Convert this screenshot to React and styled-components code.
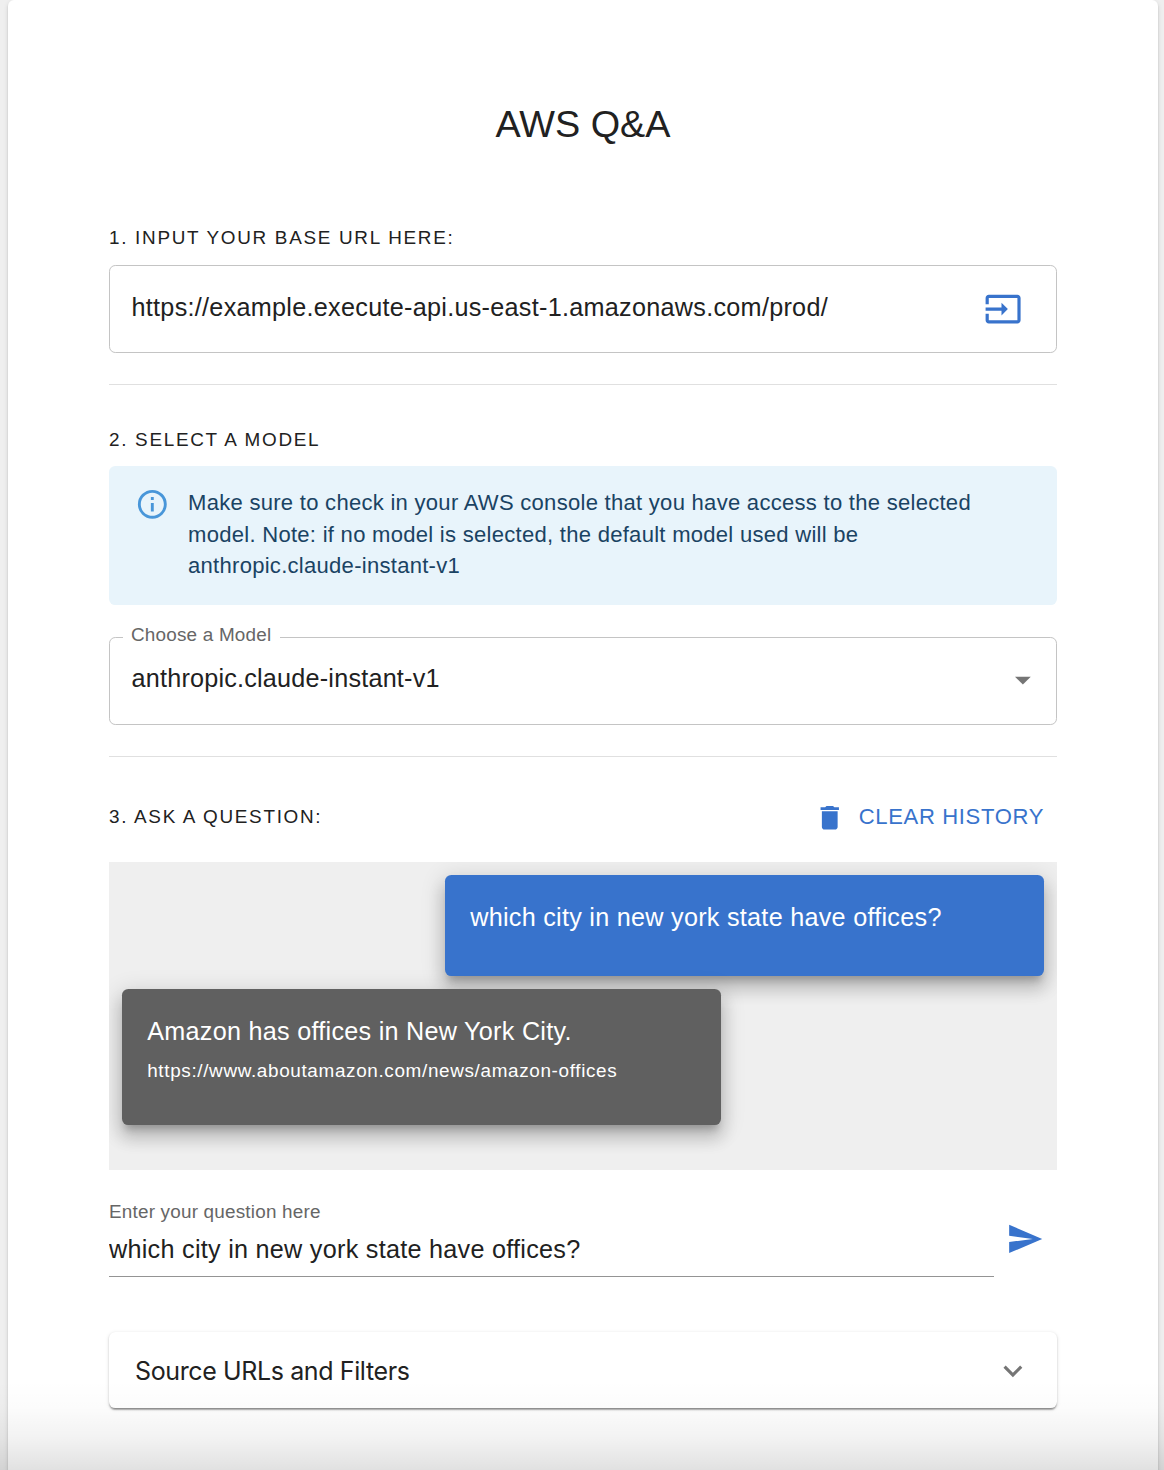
import React, { useState } from "react";
import styled, { createGlobalStyle } from "styled-components";

const GlobalStyle = createGlobalStyle`
  *, *::before, *::after { box-sizing: border-box; }
  html, body { margin: 0; padding: 0; }
  body {
    height: 1470px;
    overflow: hidden;
    background: #efefef;
    color: #212121;
    font-family: "Liberation Sans", Helvetica, Arial, sans-serif;
    font-size: 25.2px;
    letter-spacing: 0.01em;
  }
`;

const Page = styled.div`
  position: relative;
  height: 1470px;
  padding: 0 6px 0 8px;
  overflow: hidden;
`;

const Paper = styled.main`
  display: flex;
  flex-direction: column;
  height: 1500px;
  padding: 96px 101px 0;
  background: #fff;
  border-radius: 6px;
  box-shadow: 0 3px 2px -2px rgba(0, 0, 0, 0.2), 0 2px 2px rgba(0, 0, 0, 0.14),
    0 2px 5px rgba(0, 0, 0, 0.12);
`;

const BottomShade = styled.div`
  position: absolute;
  left: 0;
  right: 0;
  bottom: 0;
  height: 90px;
  pointer-events: none;
  background: linear-gradient(
    rgba(0, 0, 0, 0),
    rgba(0, 0, 0, 0.01) 30%,
    rgba(0, 0, 0, 0.05) 65%,
    rgba(0, 0, 0, 0.118)
  );
`;

const Title = styled.h1`
  margin: 0 0 61px;
  font-size: 37.8px;
  font-weight: 400;
  line-height: 56px;
  letter-spacing: 0;
  text-align: center;
`;

const Overline = styled.h2`
  margin: 0;
  font-size: 18.9px;
  font-weight: 400;
  line-height: 50px;
  letter-spacing: 1.7px;
  text-transform: uppercase;
`;

const Divider = styled.hr`
  width: 100%;
  height: 1px;
  margin: 31px 0 ${(p) => p.$after}px;
  border: 0;
  background: #e0e0e0;
`;

const OutlinedField = styled.div`
  display: flex;
  align-items: center;
  justify-content: space-between;
  height: 88px;
  margin-top: ${(p) => p.$gap}px;
  padding: 0 ${(p) => p.$end}px 2px 21.5px;
  border: 1px solid #c4c4c4;
  border-radius: 6.3px;
  position: relative;
`;

const FieldInput = styled.input`
  flex: 1;
  min-width: 0;
  padding: 0 0 2px;
  border: 0;
  outline: 0;
  background: none;
  color: inherit;
  font: inherit;
  letter-spacing: 0.0112em;
`;

const SelectValue = styled.span`
  padding-bottom: 4px;
  letter-spacing: 0.0085em;
`;

const FloatingLabel = styled.label`
  position: absolute;
  top: -16px;
  left: 13px;
  width: 157px;
  padding-left: 8px;
  background: #fff;
  color: #666;
  font-size: 18.9px;
  line-height: 26px;
  letter-spacing: 0.2px;
  white-space: nowrap;
`;

const Alert = styled.div`
  display: flex;
  gap: 18.4px;
  height: 139px;
  margin-top: 1px;
  padding: 21px 25px 0 26px;
  border-radius: 6.3px;
  background: #e8f4fb;
  color: #1a4363;
  font-size: 22.05px;
  line-height: 31.5px;
  letter-spacing: 0.27px;
`;

const AlertText = styled.p`
  width: 800px;
  margin: 0;
`;

const IconButton = styled.button`
  display: flex;
  padding: 0;
  border: 0;
  background: none;
  color: #3873cc;
`;

const Glyph = styled.svg`
  display: block;
  flex: none;
  width: ${(p) => p.$size}px;
  height: ${(p) => p.$size}px;
  margin-top: ${(p) => p.$top || 0}px;
  fill: ${(p) => p.$color || "currentColor"};
`;

const QuestionHeader = styled.div`
  display: flex;
  align-items: center;
  justify-content: space-between;
  height: 60px;
`;

const ClearButton = styled.button`
  display: flex;
  align-items: center;
  gap: 13.2px;
  padding: 0 13px 0 0;
  border: 0;
  background: none;
  color: #3873cc;
  font: inherit;
  font-size: 22.05px;
  letter-spacing: 0.0295em;
  text-transform: uppercase;
`;

const ChatLog = styled.section`
  display: flex;
  flex-direction: column;
  gap: 13px;
  height: 308px;
  margin-top: 15px;
  padding: 13px;
  background: #efefef;
  overflow: hidden;
`;

const Bubble = styled.div`
  flex: none;
  align-self: ${(p) => (p.$mine ? "flex-end" : "flex-start")};
  width: 599px;
  height: ${(p) => (p.$mine ? 101 : 136)}px;
  padding: 24px 25.2px;
  border-radius: 6.3px;
  background: ${(p) => (p.$mine ? "#3873cc" : "#606060")};
  color: #fff;
  line-height: 37.8px;
  letter-spacing: 0.27px;
  box-shadow: 0 7.9px 7.9px -4.7px rgba(0, 0, 0, 0.2),
    0 12.6px 15.75px 1.6px rgba(0, 0, 0, 0.14),
    0 4.7px 22px 3.15px rgba(0, 0, 0, 0.12);
`;

const BubbleLink = styled.div`
  margin-top: 4px;
  font-size: 18.9px;
  line-height: 31px;
  letter-spacing: 0.65px;
`;

const AskRow = styled.form`
  display: flex;
  justify-content: space-between;
  margin-top: 28px;
  padding-right: 13.3px;
`;

const AskField = styled.div`
  display: flex;
  flex-direction: column;
  width: 885px;
  height: 79px;
  border-bottom: 1px solid #949494;
`;

const AskLabel = styled.label`
  color: #666;
  font-size: 18.9px;
  line-height: 28px;
  letter-spacing: 0.2px;
`;

const AskInput = styled(FieldInput)`
  flex: none;
  height: 48px;
  letter-spacing: 0.27px;
`;

const SendButton = styled(IconButton)`
  align-self: flex-start;
  margin-top: 22px;
`;

const Accordion = styled.button`
  display: flex;
  flex: none;
  align-items: center;
  justify-content: space-between;
  height: 76px;
  margin-top: 55px;
  padding: 1px 25px 0 26px;
  border: 0;
  border-radius: 6.3px;
  background: #fff;
  color: inherit;
  font-family: Inter, sans-serif;
  font-size: 25px;
  letter-spacing: -0.38px;
  box-shadow: 0 3px 2px -2px rgba(0, 0, 0, 0.3), 0 1.5px 1.5px rgba(0, 0, 0, 0.22),
    0 1px 4px rgba(0, 0, 0, 0.12);
`;

const PATHS = {
  input:
    "M21 3.01H3c-1.1 0-2 .9-2 2V9h2V4.99h18v14.03H3V15H1v4.01c0 1.1.9 1.98 2 1.98h18c1.1 0 2-.88 2-1.98v-14c0-1.11-.9-2-2-2zM11 16l4-4-4-4v3H1v2h10v3z",
  info: "M11,9H13V7H11M12,20C7.59,20 4,16.41 4,12C4,7.59 7.59,4 12,4C16.41,4 20,7.59 20,12C20,16.41 16.41,20 12,20M12,2A10,10 0 0,0 2,12A10,10 0 0,0 12,22A10,10 0 0,0 22,12A10,10 0 0,0 12,2M11,17H13V11H11V17Z",
  dropdown: "M7 10l5 5 5-5z",
  trash: "M6 19c0 1.1.9 2 2 2h8c1.1 0 2-.9 2-2V7H6v12zM19 4h-3.5l-1-1h-5l-1 1H5v2h14V4z",
  send: "M2.01 21 23 12 2.01 3 2 10l15 2-15 2z",
  expand: "M16.59 8.59 12 13.17 7.41 8.59 6 10l6 6 6-6z",
};

function Icon({ name, size = 37.8, color, top }) {
  return (
    <Glyph viewBox="0 0 24 24" aria-hidden="true" $size={size} $color={color} $top={top}>
      <path d={PATHS[name]} />
    </Glyph>
  );
}

export default function App() {
  const [url, setUrl] = useState("https://example.execute-api.us-east-1.amazonaws.com/prod/");
  const [question, setQuestion] = useState("which city in new york state have offices?");

  return (
    <>
      <GlobalStyle />
      <Page>
        <Paper>
          <Title>AWS Q&amp;A</Title>

          <Overline>1. Input your base url here:</Overline>
          <OutlinedField $gap={2} $end={33.8}>
            <FieldInput value={url} onChange={(e) => setUrl(e.target.value)} />
            <IconButton aria-label="Submit URL">
              <Icon name="input" size={38.2} top={2} />
            </IconButton>
          </OutlinedField>

          <Divider $after={30} />

          <Overline>2. Select a model</Overline>
          <Alert>
            <Icon name="info" size={34.65} color="#4896d9" />
            <AlertText>
              Make sure to check in your AWS console that you have access to the selected model.
              Note: if no model is selected, the default model used will be
              anthropic.claude-instant-v1
            </AlertText>
          </Alert>
          <OutlinedField $gap={32} $end={14}>
            <FloatingLabel>Choose a Model</FloatingLabel>
            <SelectValue>anthropic.claude-instant-v1</SelectValue>
            <Icon name="dropdown" color="#757575" />
          </OutlinedField>

          <Divider $after={30} />

          <QuestionHeader>
            <Overline>3. Ask a question:</Overline>
            <ClearButton>
              <Icon name="trash" size={31.5} top={2} />
              Clear history
            </ClearButton>
          </QuestionHeader>

          <ChatLog>
            <Bubble $mine>which city in new york state have offices?</Bubble>
            <Bubble>
              Amazon has offices in New York City.
              <BubbleLink>https://www.aboutamazon.com/news/amazon-offices</BubbleLink>
            </Bubble>
          </ChatLog>

          <AskRow onSubmit={(e) => e.preventDefault()}>
            <AskField>
              <AskLabel htmlFor="question">Enter your question here</AskLabel>
              <AskInput
                id="question"
                value={question}
                onChange={(e) => setQuestion(e.target.value)}
              />
            </AskField>
            <SendButton aria-label="Send">
              <Icon name="send" />
            </SendButton>
          </AskRow>

          <Accordion>
            Source URLs and Filters
            <Icon name="expand" color="#757575" />
          </Accordion>
        </Paper>
        <BottomShade />
      </Page>
    </>
  );
}
